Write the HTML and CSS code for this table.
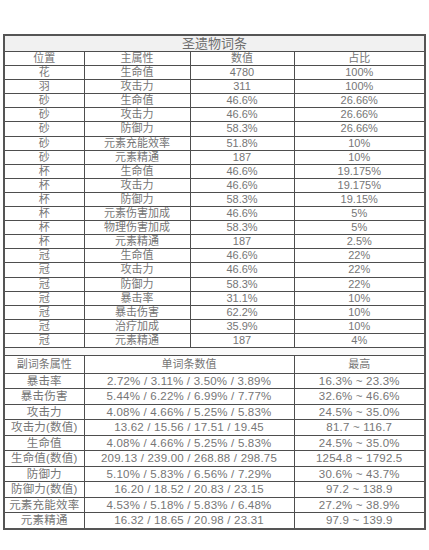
FILE: index.html
```html
<!DOCTYPE html>
<html lang="zh-CN">
<head>
<meta charset="utf-8">
<title>圣遗物词条</title>
<link rel="stylesheet" href="styles.css">
</head>
<body>
<table class="sheet">
  <colgroup>
    <col class="c1"><col class="c2"><col class="c3"><col class="c4">
  </colgroup>
  <tr class="title"><td colspan="4">圣遗物词条</td></tr>
  <tr class="r"><td>位置</td><td>主属性</td><td>数值</td><td>占比</td></tr>
  <tr class="r"><td>花</td><td>生命值</td><td>4780</td><td>100%</td></tr>
  <tr class="r"><td>羽</td><td>攻击力</td><td>311</td><td>100%</td></tr>
  <tr class="r"><td>砂</td><td>生命值</td><td>46.6%</td><td>26.66%</td></tr>
  <tr class="r"><td>砂</td><td>攻击力</td><td>46.6%</td><td>26.66%</td></tr>
  <tr class="r"><td>砂</td><td>防御力</td><td>58.3%</td><td>26.66%</td></tr>
  <tr class="r"><td>砂</td><td>元素充能效率</td><td>51.8%</td><td>10%</td></tr>
  <tr class="r"><td>砂</td><td>元素精通</td><td>187</td><td>10%</td></tr>
  <tr class="r"><td>杯</td><td>生命值</td><td>46.6%</td><td>19.175%</td></tr>
  <tr class="r"><td>杯</td><td>攻击力</td><td>46.6%</td><td>19.175%</td></tr>
  <tr class="r"><td>杯</td><td>防御力</td><td>58.3%</td><td>19.15%</td></tr>
  <tr class="r"><td>杯</td><td>元素伤害加成</td><td>46.6%</td><td>5%</td></tr>
  <tr class="r"><td>杯</td><td>物理伤害加成</td><td>58.3%</td><td>5%</td></tr>
  <tr class="r"><td>杯</td><td>元素精通</td><td>187</td><td>2.5%</td></tr>
  <tr class="r"><td>冠</td><td>生命值</td><td>46.6%</td><td>22%</td></tr>
  <tr class="r"><td>冠</td><td>攻击力</td><td>46.6%</td><td>22%</td></tr>
  <tr class="r"><td>冠</td><td>防御力</td><td>58.3%</td><td>22%</td></tr>
  <tr class="r"><td>冠</td><td>暴击率</td><td>31.1%</td><td>10%</td></tr>
  <tr class="r"><td>冠</td><td>暴击伤害</td><td>62.2%</td><td>10%</td></tr>
  <tr class="r"><td>冠</td><td>治疗加成</td><td>35.9%</td><td>10%</td></tr>
  <tr class="r"><td>冠</td><td>元素精通</td><td>187</td><td>4%</td></tr>
  <tr class="gap"><td colspan="4"></td></tr>
  <tr class="h2"><td>副词条属性</td><td colspan="2">单词条数值</td><td>最高</td></tr>
  <tr class="s"><td>暴击率</td><td colspan="2">2.72% / 3.11% / 3.50% / 3.89%</td><td>16.3% ~ 23.3%</td></tr>
  <tr class="s"><td>暴击伤害</td><td colspan="2">5.44% / 6.22% / 6.99% / 7.77%</td><td>32.6% ~ 46.6%</td></tr>
  <tr class="s"><td>攻击力</td><td colspan="2">4.08% / 4.66% / 5.25% / 5.83%</td><td>24.5% ~ 35.0%</td></tr>
  <tr class="s"><td>攻击力(数值)</td><td colspan="2">13.62 / 15.56 / 17.51 / 19.45</td><td>81.7 ~ 116.7</td></tr>
  <tr class="s"><td>生命值</td><td colspan="2">4.08% / 4.66% / 5.25% / 5.83%</td><td>24.5% ~ 35.0%</td></tr>
  <tr class="s"><td>生命值(数值)</td><td colspan="2">209.13 / 239.00 / 268.88 / 298.75</td><td>1254.8 ~ 1792.5</td></tr>
  <tr class="s"><td>防御力</td><td colspan="2">5.10% / 5.83% / 6.56% / 7.29%</td><td>30.6% ~ 43.7%</td></tr>
  <tr class="s"><td>防御力(数值)</td><td colspan="2">16.20 / 18.52 / 20.83 / 23.15</td><td>97.2 ~ 138.9</td></tr>
  <tr class="s"><td>元素充能效率</td><td colspan="2">4.53% / 5.18% / 5.83% / 6.48%</td><td>27.2% ~ 38.9%</td></tr>
  <tr class="s"><td>元素精通</td><td colspan="2">16.32 / 18.65 / 20.98 / 23.31</td><td>97.9 ~ 139.9</td></tr>
</table>
</body>
</html>
```

FILE: styles.css
```css
html, body {
  margin: 0;
  padding: 0;
  background: #ffffff;
}
body {
  padding: 34px 5px 0 3px;
  font-family: "Liberation Sans", "Noto Sans CJK SC", sans-serif;
  color: #767676;
}
.sheet {
  width: 421px;
  border-collapse: collapse;
  table-layout: fixed;
  border: 2px solid #555555;
}
.c1 { width: 80px; }
.c2 { width: 106px; }
.c3 { width: 104px; }
.c4 { width: 131px; }
.sheet td {
  border: 1px solid #4e4e4e;
  padding: 0;
  text-align: center;
  white-space: nowrap;
  overflow: hidden;
  font-size: 11px;
}
.title td {
  background: #f1f1f1;
  font-size: 13px;
  line-height: 15px;
  color: #6e6e6e;
}
.r td {
  line-height: 13.1px;
  height: 13.1px;
}
.gap td {
  height: 7px;
  line-height: 7px;
  background: #fafafa;
}
.h2 td {
  line-height: 17px;
  height: 17px;
}
.s td {
  line-height: 14.5px;
  height: 14.5px;
  font-size: 11.5px;
  letter-spacing: 0.2px;
}
```
